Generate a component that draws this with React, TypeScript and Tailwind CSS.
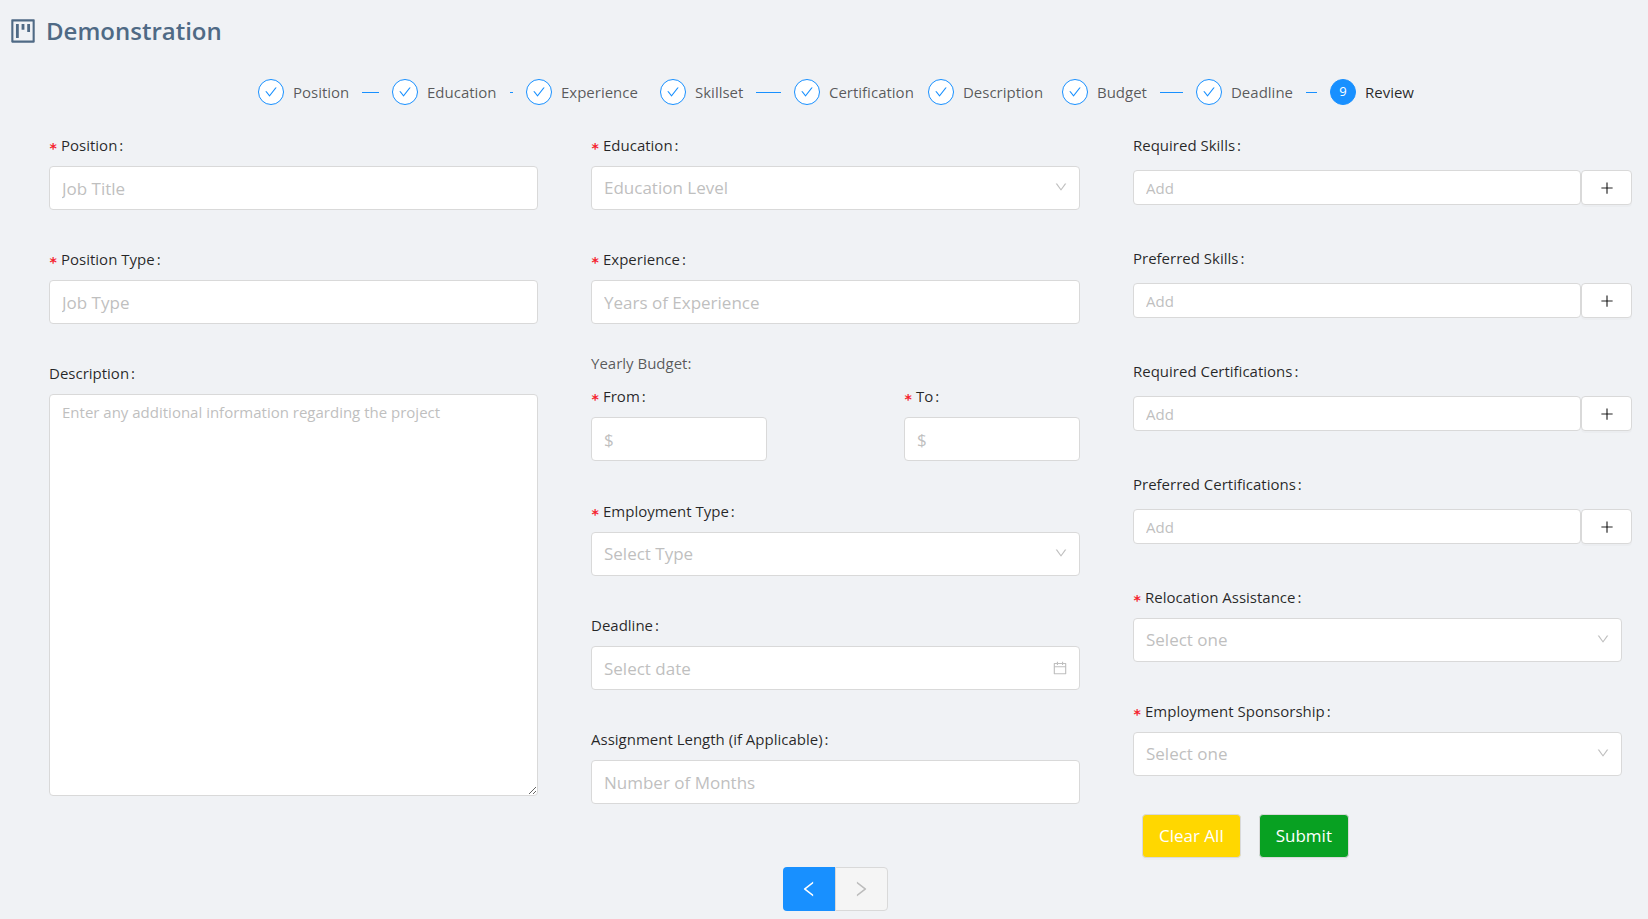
import { useId, type ReactNode } from "react";
import {
  AiOutlineCalendar,
  AiOutlineCheck,
  AiOutlineDown,
  AiOutlineLeft,
  AiOutlinePlus,
  AiOutlineProject,
  AiOutlineRight,
} from "react-icons/ai";

const STEPS = [
  "Position",
  "Education",
  "Experience",
  "Skillset",
  "Certification",
  "Description",
  "Budget",
  "Deadline",
  "Review",
];

const box =
  "block w-full rounded-[4px] border border-[#d9d9d9] bg-white px-3 outline-none placeholder:text-[#bfbfbf] focus:border-[#40a9ff]";

function Field({
  id,
  label,
  required = false,
  children,
}: {
  id: string;
  label: string;
  required?: boolean;
  children: ReactNode;
}) {
  return (
    <div className="flex flex-col gap-2">
      <label htmlFor={id} className="flex h-6 items-center pb-0.5 text-[15px] text-black/85">
        {required && (
          <span className="mr-1 flex h-6 w-2 items-center pt-1.5 font-['DejaVu_Sans_Mono'] text-sm font-bold text-[#f5222d]">
            *
          </span>
        )}
        {label}
        <span className="ml-0.5">:</span>
      </label>
      {children}
    </div>
  );
}

function TextField({ label, placeholder, required }: { label: string; placeholder: string; required?: boolean }) {
  const id = useId();
  return (
    <Field id={id} label={label} required={required}>
      <input id={id} type="text" placeholder={placeholder} className={`${box} h-11 text-[17px] text-black/85`} />
    </Field>
  );
}

function SelectField({ label, placeholder, required }: { label: string; placeholder: string; required?: boolean }) {
  const id = useId();
  return (
    <Field id={id} label={label} required={required}>
      <div className="relative">
        <select id={id} defaultValue="" className={`${box} h-11 appearance-none text-[17px] text-[#bfbfbf]`}>
          <option value="">{placeholder}</option>
        </select>
        <AiOutlineDown className="pointer-events-none absolute top-3.5 right-3 size-3.5 text-[#bfbfbf]" />
      </div>
    </Field>
  );
}

function DateField({ label, placeholder }: { label: string; placeholder: string }) {
  const id = useId();
  return (
    <Field id={id} label={label}>
      <div className="relative">
        <input id={id} type="text" placeholder={placeholder} className={`${box} h-11 text-[17px] text-black/85`} />
        <AiOutlineCalendar className="pointer-events-none absolute top-3.5 right-3 size-4 text-[#bfbfbf]" />
      </div>
    </Field>
  );
}

function AddField({ label }: { label: string }) {
  const id = useId();
  return (
    <Field id={id} label={label}>
      <div className="-mr-2.5 flex py-1">
        <input
          id={id}
          type="text"
          placeholder="Add"
          className={`${box} h-[35px] min-w-0 flex-1 text-[15px] text-black/85`}
        />
        <button
          type="button"
          aria-label={`Add to ${label}`}
          className="flex h-[35px] w-[51px] items-center justify-center rounded-[4px] border border-[#d9d9d9] bg-white text-black/85 shadow-[0_2px_0_rgba(0,0,0,0.02)]"
        >
          <AiOutlinePlus className="size-4" />
        </button>
      </div>
    </Field>
  );
}

function Steps() {
  return (
    <ol className="flex justify-center pl-6">
      {STEPS.map((name, i) => {
        const current = i === STEPS.length - 1;
        return (
          <li
            key={name}
            aria-current={current ? "step" : undefined}
            className={`flex h-[26px] items-center text-[15px] ${current ? "text-black/85" : "w-[134px] text-black/65"}`}
          >
            <span
              className={`mr-[9px] flex size-[26px] shrink-0 items-center justify-center rounded-full border border-[#1890ff] ${
                current ? "bg-[#1890ff] text-[13px] text-white" : "bg-white text-[#1890ff]"
              }`}
            >
              {current ? i + 1 : <AiOutlineCheck className="size-3.5" />}
            </span>
            <span className="shrink-0">{name}</span>
            {!current && <span className="mx-[13px] h-px min-w-0 flex-1 bg-[#1890ff]" />}
          </li>
        );
      })}
    </ol>
  );
}

export default function App() {
  const descriptionId = useId();
  return (
    <main className="min-h-screen bg-[#f0f2f5] font-['Open_Sans','Noto_Sans',sans-serif]">
      <header className="flex h-[62px] items-center gap-2 px-2 text-[#4f6a85]">
        <AiOutlineProject className="size-[30px]" />
        <h1 className="text-2xl leading-8 font-semibold">Demonstration</h1>
      </header>

      <div className="pt-[17px]">
        <Steps />
      </div>

      <form className="pt-[29px]" onSubmit={(e) => e.preventDefault()}>
        <div className="grid grid-cols-3 gap-[53px] pr-[26px] pl-[49px]">
          <div className="flex flex-col gap-[38px]">
            <TextField label="Position" placeholder="Job Title" required />
            <TextField label="Position Type" placeholder="Job Type" required />
            <Field id={descriptionId} label="Description">
              <textarea
                id={descriptionId}
                placeholder="Enter any additional information regarding the project"
                className={`${box} h-[402px] resize-y py-[5px] text-[15px] leading-6 text-black/85`}
              />
            </Field>
          </div>

          <div className="flex flex-col gap-[38px]">
            <SelectField label="Education" placeholder="Education Level" required />
            <TextField label="Experience" placeholder="Years of Experience" required />
            <fieldset className="-mt-[11px]">
              <legend className="mb-2.5 h-6 text-[15px] leading-6 text-black/65">Yearly Budget:</legend>
              <div className="flex justify-between pb-px">
                <div className="w-9/25">
                  <TextField label="From" placeholder="$" required />
                </div>
                <div className="w-9/25">
                  <TextField label="To" placeholder="$" required />
                </div>
              </div>
            </fieldset>
            <SelectField label="Employment Type" placeholder="Select Type" required />
            <DateField label="Deadline" placeholder="Select date" />
            <TextField label="Assignment Length (if Applicable)" placeholder="Number of Months" />
          </div>

          <div className="flex flex-col gap-[38px]">
            <AddField label="Required Skills" />
            <AddField label="Preferred Skills" />
            <AddField label="Required Certifications" />
            <AddField label="Preferred Certifications" />
            <SelectField label="Relocation Assistance" placeholder="Select one" required />
            <SelectField label="Employment Sponsorship" placeholder="Select one" required />
            <div className="flex gap-[18px] pl-[9px]">
              <button
                type="reset"
                className="h-11 rounded-[4px] border border-[#d9d9d9] bg-[#ffd700] px-4 text-[17px] text-white shadow-[0_2px_0_rgba(0,0,0,0.02)]"
              >
                Clear All
              </button>
              <button
                type="submit"
                className="h-11 rounded-[4px] border border-[#d9d9d9] bg-[#08a122] px-4 text-[17px] text-white shadow-[0_2px_0_rgba(0,0,0,0.02)]"
              >
                Submit
              </button>
            </div>
          </div>
        </div>

        <nav aria-label="Steps" className="flex justify-center pt-[9px] pb-2 pl-[22px]">
          <button
            type="button"
            aria-label="Previous"
            className="flex h-11 w-[52px] items-center justify-center rounded-l-[4px] bg-[#1890ff] text-white"
          >
            <AiOutlineLeft className="size-5" />
          </button>
          <button
            type="button"
            aria-label="Next"
            disabled
            className="flex h-11 w-[53px] items-center justify-center rounded-r-[4px] border border-[#d9d9d9] bg-[#f5f5f5] text-[#bcbcbc]"
          >
            <AiOutlineRight className="size-5" />
          </button>
        </nav>
      </form>
    </main>
  );
}
